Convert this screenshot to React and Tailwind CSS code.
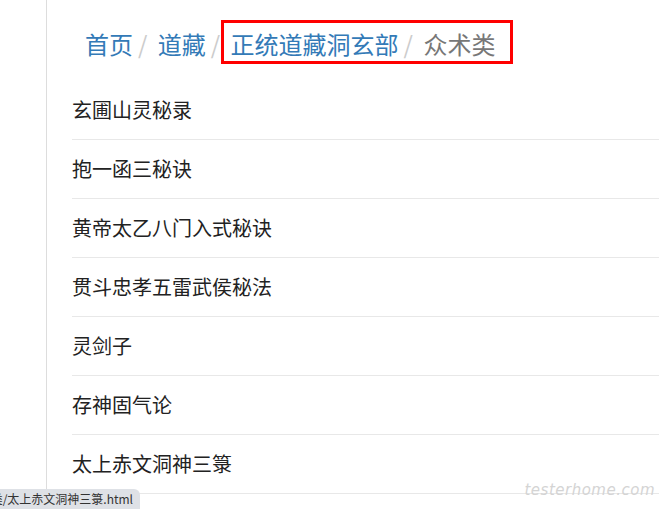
import React from "react";

const items = [
  "玄圃山灵秘录",
  "抱一函三秘诀",
  "黄帝太乙八门入式秘诀",
  "贯斗忠孝五雷武侯秘法",
  "灵剑子",
  "存神固气论",
  "太上赤文洞神三箓",
];

const font = { fontFamily: '"Microsoft YaHei", "Noto Sans CJK SC", "Noto Sans", sans-serif' };

export default function App() {
  return (
    <div className="relative w-[659px] h-[509px] overflow-hidden bg-white" style={font}>
      <div className="ml-[46px] -mt-[4px] h-[520px] border-l border-t border-[#dddddd] rounded-tl-[5px] pl-[25px] pt-[30px]">
        <div className="flex items-center h-[34px] leading-[34px] pl-[13px] text-[24px] whitespace-nowrap mb-[20px]">
          <span className="text-[#337ab7]">首页</span>
          <span className="text-[#cccccc] px-[5px]">/&nbsp;</span>
          <span className="text-[#337ab7]">道藏</span>
          <span className="text-[#cccccc] px-[5px]">/&nbsp;</span>
          <span className="text-[#337ab7]">正统道藏洞玄部</span>
          <span className="text-[#cccccc] px-[5px]">/&nbsp;</span>
          <span className="text-[#777777]">众术类</span>
        </div>
        <div className="flex flex-col">
          {items.map((t) => (
            <div
              key={t}
              className="py-[15px] leading-[28px] text-[20px] text-[#222222] border-b border-[#e8e8e8] whitespace-nowrap"
            >
              {t}
            </div>
          ))}
        </div>
      </div>

      <div className="absolute left-[221px] top-[20px] w-[292px] h-[44px] border-[3px] border-[#ff0000]" />

      <div className="absolute right-[4px] bottom-[8px] text-[15px] italic text-[#d4d4d4] tracking-[0.5px]" style={{ fontFamily: '"DejaVu Sans", sans-serif', fontWeight: 200 }}>
        testerhome.com
      </div>

      <div className="absolute left-0 bottom-0 w-[140px] h-[20px] bg-[#dee1e6] rounded-tr-[6px] flex justify-end items-center overflow-hidden pr-[7px]">
        <span className="whitespace-nowrap text-[12px] text-[#333333] shrink-0" style={{ fontFamily: '"Microsoft YaHei", "Noto Sans CJK SC", sans-serif' }}>
          众术类/太上赤文洞神三箓.html
        </span>
      </div>
    </div>
  );
}
